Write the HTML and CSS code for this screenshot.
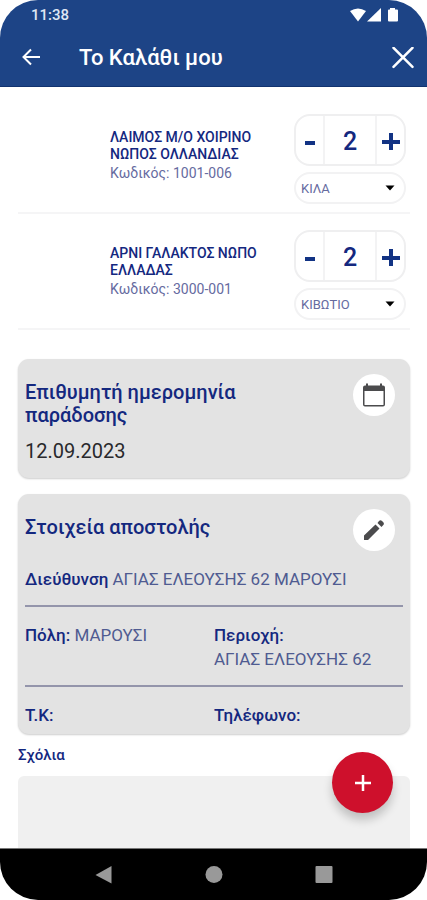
FILE: index.html
```html
<!DOCTYPE html>
<html lang="el">
<head>
<meta charset="utf-8">
<meta name="viewport" content="width=device-width, initial-scale=1">
<title>Το Καλάθι μου</title>
<link rel="stylesheet" href="styles.css">
</head>
<body>
<div class="screen">
  <header class="top">
    <div class="status">
      <span>11:38</span>
      <svg class="status-icons" width="50" height="16" viewBox="0 0 50 16" fill="currentColor" aria-hidden="true">
        <path d="M0 4Q8 -1 16 4L8 14.500z"/>
        <path d="M31 1V14.500H17z"/>
        <path d="M40 1h5v1.500h2a1 1 0 0 1 1 1v10a1 1 0 0 1-1 1h-8a1 1 0 0 1-1-1v-10a1 1 0 0 1 1-1h1z"/>
      </svg>
    </div>
    <div class="bar">
      <button class="icon-btn" type="button" aria-label="Πίσω">
        <svg width="20" height="20" viewBox="0 0 20 20" fill="none" stroke="currentColor" stroke-width="2"><path d="M19 9H3M10 1.500L2.500 9L10 16.500"/></svg>
      </button>
      <h1>Το Καλάθι μου</h1>
      <button class="icon-btn" type="button" aria-label="Κλείσιμο">
        <svg width="22" height="22" viewBox="0 0 22 22" fill="none" stroke="currentColor" stroke-width="2.500" stroke-linecap="round"><path d="M1.500 0.800L20.500 19.800M20.500 0.800L1.500 19.800"/></svg>
      </button>
    </div>
  </header>

  <main class="content">
    <ul class="items">
      <li class="item">
        <div class="info">
          <h2>ΛΑΙΜΟΣ Μ/Ο ΧΟΙΡΙΝΟ ΝΩΠΟΣ ΟΛΛΑΝΔΙΑΣ</h2>
          <p>Κωδικός: 1001-006</p>
        </div>
        <div class="controls">
          <div class="stepper">
            <button type="button" aria-label="Μείωση"><svg width="20" height="20" viewBox="0 0 20 20" stroke="currentColor" stroke-width="4"><path d="M5 13H15"/></svg></button>
            <input type="text" inputmode="numeric" value="2" aria-label="Ποσότητα">
            <button type="button" aria-label="Αύξηση"><svg width="20" height="20" viewBox="0 0 20 20" stroke="currentColor" stroke-width="4"><path d="M1 12H19M10 3V20"/></svg></button>
          </div>
          <div class="unit">
            <select aria-label="Μονάδα"><option>ΚΙΛΑ</option><option>ΚΙΒΩΤΙΟ</option></select>
            <svg class="caret" width="10" height="6" viewBox="0 0 10 6" aria-hidden="true"><path d="M0.500 0.500H9.500L5 5.500z"/></svg>
          </div>
        </div>
      </li>
      <li class="item">
        <div class="info">
          <h2>ΑΡΝΙ ΓΑΛΑΚΤΟΣ ΝΩΠΟ ΕΛΛΑΔΑΣ</h2>
          <p>Κωδικός: 3000-001</p>
        </div>
        <div class="controls">
          <div class="stepper">
            <button type="button" aria-label="Μείωση"><svg width="20" height="20" viewBox="0 0 20 20" stroke="currentColor" stroke-width="4"><path d="M5 13H15"/></svg></button>
            <input type="text" inputmode="numeric" value="2" aria-label="Ποσότητα">
            <button type="button" aria-label="Αύξηση"><svg width="20" height="20" viewBox="0 0 20 20" stroke="currentColor" stroke-width="4"><path d="M1 12H19M10 3V20"/></svg></button>
          </div>
          <div class="unit">
            <select aria-label="Μονάδα"><option>ΚΙΒΩΤΙΟ</option><option>ΚΙΛΑ</option></select>
            <svg class="caret" width="10" height="6" viewBox="0 0 10 6" aria-hidden="true"><path d="M0.500 0.500H9.500L5 5.500z"/></svg>
          </div>
        </div>
      </li>
    </ul>

    <section class="card">
      <div class="card-head">
        <div>
          <h2>Επιθυμητή ημερομηνία παράδοσης</h2>
          <p class="date">12.09.2023</p>
        </div>
        <button class="round" type="button" aria-label="Επιλογή ημερομηνίας">
          <svg width="24" height="26" viewBox="0 0 24 26" fill="#4b4b4d"><path fill-rule="evenodd" d="M4 1.500h2v2h12v-2h2v2h1a2 2 0 0 1 2 2v17a2 2 0 0 1-2 2H3a2 2 0 0 1-2-2v-17a2 2 0 0 1 2-2h1zM2.500 9v13.500q0 .5.500.5h18q.5 0 .5-.5V9z"/></svg>
        </button>
      </div>
    </section>

    <section class="card">
      <div class="card-head">
        <h2>Στοιχεία αποστολής</h2>
        <button class="round" type="button" aria-label="Επεξεργασία">
          <svg width="20" height="20" viewBox="0 0 20 20" fill="#4b4b4d"><path d="M0 15.500L11.500 4.500L15.500 8.500L4 20H0zM13.500 3L15 1Q16.500 -0.500 18 1L19.300 2.300Q20.500 3.700 19.300 5L17.500 7z"/></svg>
        </button>
      </div>
      <dl class="details">
        <div class="row"><div><dt>Διεύθυνση</dt> <dd>ΑΓΙΑΣ ΕΛΕΟΥΣΗΣ 62 ΜΑΡΟΥΣΙ</dd></div></div>
        <div class="row two"><div><dt>Πόλη:</dt> <dd>ΜΑΡΟΥΣΙ</dd></div><div class="stacked"><dt>Περιοχή:</dt><dd>ΑΓΙΑΣ ΕΛΕΟΥΣΗΣ 62</dd></div></div>
        <div class="row two"><div><dt>Τ.Κ:</dt> <dd></dd></div><div><dt>Τηλέφωνο:</dt> <dd></dd></div></div>
      </dl>
    </section>

    <label class="notes-label" for="notes">Σχόλια</label>
    <textarea class="notes" id="notes"></textarea>
    <button class="fab" type="button" aria-label="Προσθήκη">
      <svg width="18" height="18" viewBox="0 0 18 18" stroke="currentColor" stroke-width="2.500"><path d="M1 9H17M9 1V17"/></svg>
    </button>
  </main>

  <nav class="nav" aria-label="Σύστημα">
    <button type="button" aria-label="Πίσω"><svg width="18" height="18" viewBox="0 0 18 18"><path d="M16.500 0V17.500L0.500 9z"/></svg></button>
    <button type="button" aria-label="Αρχική"><svg width="18" height="18" viewBox="0 0 18 18"><circle cx="9" cy="8.500" r="8.500"/></svg></button>
    <button type="button" aria-label="Πρόσφατα"><svg width="18" height="18" viewBox="0 0 18 18"><rect x="0.500" y="0" width="17" height="17" rx="1"/></svg></button>
  </nav>
</div>
</body>
</html>
```
FILE: styles.css
```css
* { box-sizing: border-box; }

body {
  margin: 0;
  background: #fff;
  color: #14287f;
  font-family: Roboto, "Noto Sans", sans-serif;
}

h1, h2, p, ul, dl, dd { margin: 0; padding: 0; }

button {
  display: flex;
  align-items: center;
  justify-content: center;
  padding: 0;
  border: 0;
  background: none;
  color: inherit;
}

.screen {
  display: flex;
  flex-direction: column;
  height: 100vh;
  overflow: hidden;
  border-radius: 38px;
}

.top {
  flex: none;
  background: #1d4486;
  border-bottom: 1px solid #12336f;
  color: #fff;
}

.status {
  display: flex;
  align-items: center;
  justify-content: space-between;
  height: 30px;
  padding: 0 27px 0 31px;
  font-size: 15px;
  font-weight: 500;
  color: #dfe6f4;
}

.status-icons { color: #fff; }

.bar {
  display: flex;
  align-items: center;
  height: 56px;
  padding: 0 13px 0 21px;
}

.bar h1 {
  flex: 1;
  margin-left: 38px;
  font-size: 22px;
  font-weight: 500;
  line-height: 28px;
}

.icon-btn { min-width: 20px; height: 24px; }

.content {
  position: relative;
  display: flex;
  flex: 1;
  flex-direction: column;
  min-height: 0;
  padding: 11px 17px 0 18px;
}

.items { list-style: none; margin-bottom: 29px; }

.item {
  display: flex;
  justify-content: space-between;
  padding: 16px 4px 8px 92px;
  border-bottom: 2px solid #f5f5f6;
}

.info { flex: 1; padding: 15px 20px 0 0; }

.info h2 {
  font-size: 14px;
  font-weight: 500;
  line-height: 17px;
}

.info p {
  font-size: 14px;
  line-height: 20px;
  color: #666b9f;
}

.controls {
  display: flex;
  flex-direction: column;
  gap: 6px;
  width: 112px;
}

.stepper {
  display: grid;
  grid-template-columns: 1fr 54px 1fr;
  height: 52px;
  border: 2px solid #efeff0;
  border-radius: 16px;
  overflow: hidden;
}

.stepper input {
  width: 100%;
  min-width: 0;
  padding: 2px 0 0;
  border: solid #f3f3f4;
  border-width: 0 2px;
  background: none;
  color: inherit;
  font: 500 25px Roboto, "Noto Sans", sans-serif;
  text-align: center;
}

.stepper svg { color: #123384; }

.unit { position: relative; }

.unit select {
  display: block;
  width: 100%;
  height: 32px;
  padding: 0 28px 0 5px;
  border: 2px solid #f2f2f3;
  border-radius: 16px;
  appearance: none;
  background: #fff;
  color: #666b9f;
  font: 13px Roboto, "Noto Sans", sans-serif;
}

.caret {
  position: absolute;
  right: 11px;
  top: 13px;
  pointer-events: none;
}

.card {
  margin-bottom: 16px;
  padding: 15px 7px 0;
  border-radius: 11px;
  background: #e3e3e3;
  box-shadow: 0 1px 2px rgba(0, 0, 0, .2);
}

.card-head {
  display: flex;
  align-items: flex-start;
  justify-content: space-between;
  padding-right: 8px;
}

.card h2 {
  max-width: 240px;
  padding-top: 7px;
  font-size: 20px;
  font-weight: 500;
  line-height: 23px;
}

.date {
  padding: 12px 0 15px;
  font-size: 20px;
  line-height: 24px;
  color: #29292c;
}

.round {
  flex: none;
  width: 42px;
  height: 42px;
  border-radius: 50%;
  background: #fff;
}

.details {
  font-size: 17px;
  line-height: 24px;
}

.row { padding: 16px 0 14px; }
.row + .row { border-top: 2px solid #9495ab; }
.row:last-child { padding-bottom: 7px; }

.two {
  display: grid;
  grid-template-columns: 1fr 1fr;
}

dt, dd { display: inline; }
dt { font-weight: 500; }
dd { color: #4f5b91; }
.stacked dt, .stacked dd { display: block; }

.card + .notes-label { margin-top: -6px; }

.notes-label {
  font-size: 15px;
  font-weight: 500;
  line-height: 22px;
}

.notes {
  flex: 1;
  width: 100%;
  min-height: 0;
  margin-top: 10px;
  padding: 10px;
  border: 0;
  border-radius: 6px 6px 0 0;
  background: #f0f0f0;
  font: 16px Roboto, "Noto Sans", sans-serif;
  resize: none;
}

.fab {
  position: absolute;
  right: 34px;
  bottom: 35px;
  width: 61px;
  height: 61px;
  border-radius: 50%;
  background: #ce102c;
  color: #fff;
  box-shadow: 0 7px 10px rgba(0, 0, 0, .2);
}

.nav {
  display: flex;
  flex: none;
  align-items: center;
  justify-content: center;
  gap: 92px;
  height: 52px;
  border-top: 1px solid #777;
  background: #000;
  fill: #999;
}
```
